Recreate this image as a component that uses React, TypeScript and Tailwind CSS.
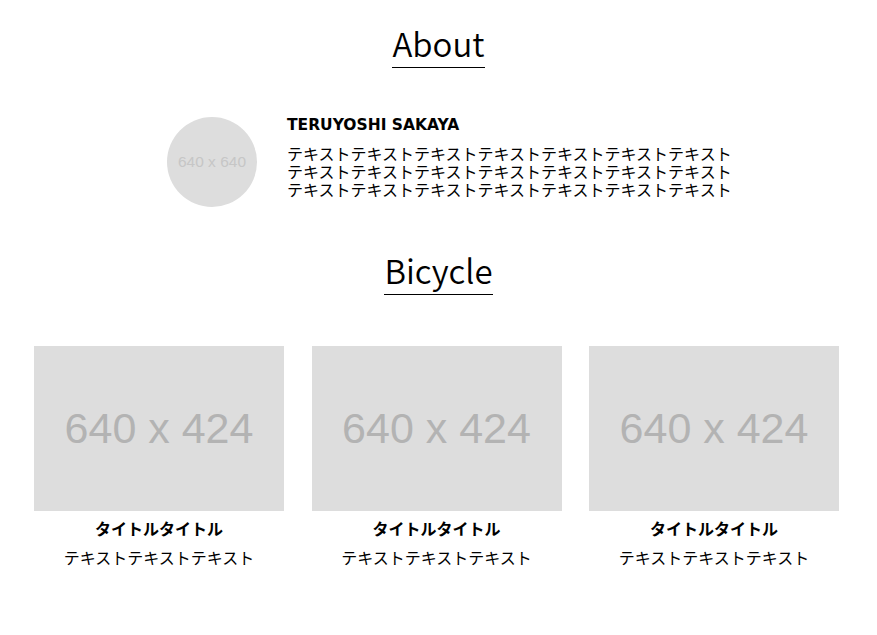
const jp = { fontFamily: '"Noto Sans CJK JP", "Noto Sans", sans-serif' };

const Placeholder = ({ label, className }: { label: string; className: string }) => (
  <div className={`flex items-center justify-center bg-[#dddddd] ${className}`}>
    <span className="font-['Liberation_Sans',Arial,sans-serif]">{label}</span>
  </div>
);

const SectionTitle = ({ children }: { children: string }) => (
  <div className="flex justify-center">
    <h2 className="border-b border-black text-[33px] font-[350] leading-[normal] text-black">{children}</h2>
  </div>
);

const cards = [1, 2, 3];

const App = () => {
  return (
    <div className="w-[877px] h-[635px] bg-white text-black overflow-hidden" style={jp}>
      <section className="pt-[19px]">
        <SectionTitle>About</SectionTitle>
        <div className="flex items-start pl-[167px] mt-[48px]">
          <Placeholder
            label="640 x 640"
            className="w-[90px] h-[90px] rounded-full mt-[1px] text-[15.5px] text-[#c6c6c6]"
          />
          <div className="ml-[30px] w-[460px]">
            <h3 className="font-['DejaVu_Sans','Noto_Sans_CJK_JP',sans-serif] text-[15.5px] font-bold leading-[normal]">
              TERUYOSHI SAKAYA
            </h3>
            <p className="mt-[10px] text-[16px] leading-[18px] w-[450px]">
              テキストテキストテキストテキストテキストテキストテキストテキストテキストテキストテキストテキストテキストテキストテキストテキストテキストテキストテキストテキストテキスト
            </p>
          </div>
        </div>
      </section>

      <section className="mt-[39px]">
        <SectionTitle>Bicycle</SectionTitle>
        <div className="pl-[34px] mt-[51px]">
          <div className="flex justify-between w-[805px]">
            {cards.map((c) => (
              <div key={c} className="w-[250px] flex flex-col items-center">
                <Placeholder
                  label="640 x 424"
                  className="w-[250px] h-[165px] text-[43px] text-[#b3b3b3]"
                />
                <h3 className="mt-[6px] text-[16px] font-bold leading-[22px]">タイトルタイトル</h3>
                <p className="mt-[7px] text-[16px] leading-[22px]">テキストテキストテキスト</p>
              </div>
            ))}
          </div>
        </div>
      </section>
    </div>
  );
};

export default App;
